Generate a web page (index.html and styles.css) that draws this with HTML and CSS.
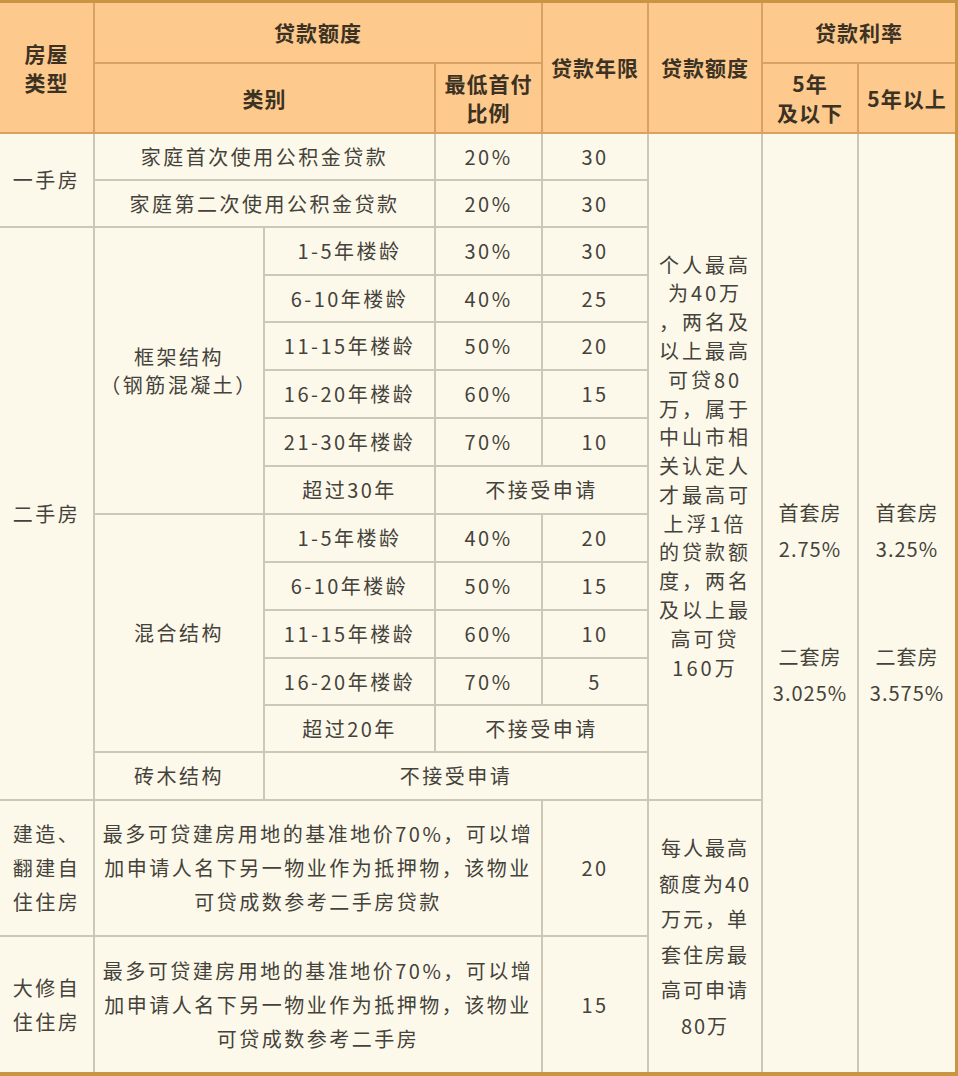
FILE: index.html
```html
<!DOCTYPE html>
<html lang="zh-CN">
<head>
<meta charset="utf-8">
<title>公积金贷款政策</title>
<link rel="stylesheet" href="styles.css">
</head>
<body>
<table class="loan">
  <colgroup>
    <col class="c1"><col class="c2"><col class="c3"><col class="c4">
    <col class="c5"><col class="c6"><col class="c7"><col class="c8">
  </colgroup>
  <thead>
    <tr class="h1">
      <th rowspan="2">房屋<br>类型</th>
      <th colspan="3">贷款额度</th>
      <th rowspan="2">贷款年限</th>
      <th rowspan="2">贷款额度</th>
      <th colspan="2" class="r">贷款利率</th>
    </tr>
    <tr class="h2">
      <th colspan="2">类别</th>
      <th>最低首付<br>比例</th>
      <th>5年<br>及以下</th>
      <th class="r">5年以上</th>
    </tr>
  </thead>
  <tbody>
    <tr class="ra">
      <td rowspan="2">一手房</td>
      <td colspan="2">家庭首次使用公积金贷款</td>
      <td>20%</td>
      <td>30</td>
      <td rowspan="14" class="quota">个人最高<br>为40万<br>，两名及<br>以上最高<br>可贷80<br>万，属于<br>中山市相<br>关认定人<br>才最高可<br>上浮1倍<br>的贷款额<br>度，两名<br>及以上最<br>高可贷<br>160万</td>
      <td rowspan="16" class="rate b"><div class="grp">首套房<br>2.75%</div><div class="grp">二套房<br>3.025%</div></td>
      <td rowspan="16" class="rate r b"><div class="grp">首套房<br>3.25%</div><div class="grp">二套房<br>3.575%</div></td>
    </tr>
    <tr class="ra"><td colspan="2">家庭第二次使用公积金贷款</td><td>20%</td><td>30</td></tr>
    <tr class="rb">
      <td rowspan="12">二手房</td>
      <td rowspan="6">框架结构<br>（钢筋混凝土）</td>
      <td>1-5年楼龄</td><td>30%</td><td>30</td>
    </tr>
    <tr class="ra"><td>6-10年楼龄</td><td>40%</td><td>25</td></tr>
    <tr class="rb"><td>11-15年楼龄</td><td>50%</td><td>20</td></tr>
    <tr class="rb"><td>16-20年楼龄</td><td>60%</td><td>15</td></tr>
    <tr class="rb"><td>21-30年楼龄</td><td>70%</td><td>10</td></tr>
    <tr class="rb"><td>超过30年</td><td colspan="2">不接受申请</td></tr>
    <tr class="rb">
      <td rowspan="5">混合结构</td>
      <td>1-5年楼龄</td><td>40%</td><td>20</td>
    </tr>
    <tr class="rb"><td>6-10年楼龄</td><td>50%</td><td>15</td></tr>
    <tr class="rb"><td>11-15年楼龄</td><td>60%</td><td>10</td></tr>
    <tr class="ra"><td>16-20年楼龄</td><td>70%</td><td>5</td></tr>
    <tr class="ra"><td>超过20年</td><td colspan="2">不接受申请</td></tr>
    <tr class="rb"><td>砖木结构</td><td colspan="3">不接受申请</td></tr>
    <tr class="rc">
      <td class="tall">建造、<br>翻建自<br>住住房</td>
      <td colspan="3" class="tall">最多可贷建房用地的基准地价70%，可以增<br>加申请人名下另一物业作为抵押物，该物业<br>可贷成数参考二手房贷款</td>
      <td>20</td>
      <td rowspan="2" class="each b">每人最高<br>额度为40<br>万元，单<br>套住房最<br>高可申请<br>80万</td>
    </tr>
    <tr class="rd">
      <td class="tall b">大修自<br>住住房</td>
      <td colspan="3" class="tall b">最多可贷建房用地的基准地价70%，可以增<br>加申请人名下另一物业作为抵押物，该物业<br>可贷成数参考二手房</td>
      <td class="b">15</td>
    </tr>
  </tbody>
</table>
</body>
</html>
```

FILE: styles.css
```css
html, body {
  margin: 0;
  padding: 0;
  background: #fdf9ea;
}

.loan {
  width: 958px;
  table-layout: fixed;
  border-collapse: separate;
  border-spacing: 0;
  border-top: 3px solid #c99540;
  border-right: 3px solid #c99540;
  border-bottom: 4px solid #c99540;
  font-family: "Noto Sans CJK SC", "Noto Sans", sans-serif;
}

.c1 { width: 95px; }
.c2 { width: 170px; }
.c3 { width: 171px; }
.c4 { width: 107px; }
.c5 { width: 106px; }
.c6 { width: 114px; }
.c7 { width: 96px; }
.c8 { width: 96px; }

th, td {
  padding: 0;
  text-align: center;
  vertical-align: middle;
  border-right: 2px solid #cdc7b6;
  border-bottom: 2px solid #cdc7b6;
}

th {
  background: #fdc98c;
  color: #3b3224;
  font-size: 21px;
  font-weight: 700;
  letter-spacing: 1px;
  line-height: 29px;
  border-right-color: #d9a263;
  border-bottom-color: #d9a263;
}

td {
  background: #fdf9ea;
  color: #44423b;
  font-size: 20px;
  letter-spacing: 2.5px;
  line-height: 28px;
}

.h1 { height: 61px; }
.h2 { height: 70px; }
.ra { height: 47px; }
.rb { height: 48px; }
.rc { height: 136px; }
.rd { height: 135px; }

.r { border-right: none; }
.b { border-bottom: none; }

.quota {
  font-size: 20px;
  letter-spacing: 3px;
  line-height: 28.8px;
}

.rate {
  font-size: 20px;
  line-height: 36px;
  letter-spacing: 1px;
}

.grp + .grp {
  margin-top: 72px;
}

.tall {
  line-height: 34px;
  letter-spacing: 2.5px;
}

.each {
  line-height: 35.5px;
  letter-spacing: 2px;
}
```
